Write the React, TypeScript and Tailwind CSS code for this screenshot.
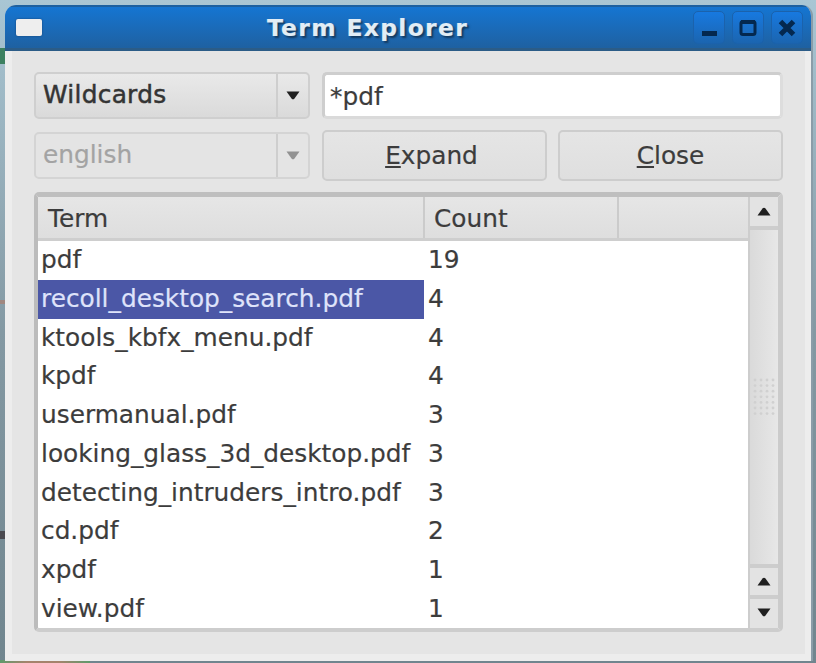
import type { ReactNode } from "react";

const rows: [string, number][] = [
  ["pdf", 19],
  ["recoll_desktop_search.pdf", 4],
  ["ktools_kbfx_menu.pdf", 4],
  ["kpdf", 4],
  ["usermanual.pdf", 3],
  ["looking_glass_3d_desktop.pdf", 3],
  ["detecting_intruders_intro.pdf", 3],
  ["cd.pdf", 2],
  ["xpdf", 1],
  ["view.pdf", 1],
];

function Arrow({ up = false, color = "#202020" }: { up?: boolean; color?: string }) {
  return (
    <svg width="14" height="9" viewBox="0 0 14 9" className={up ? "rotate-180" : ""}>
      <path d="M0.5 0.5H13.5L8.5 7.5Q7 9.2 5.5 7.5Z" fill={color} />
    </svg>
  );
}

function Combo({ label, disabled = false }: { label: string; disabled?: boolean }) {
  return (
    <div
      className={
        disabled
          ? "flex h-[47px] w-[276px] rounded-[5px] border-2 border-[#d4d4d4] bg-[#e4e4e4] text-[#a3a3a3]"
          : "flex h-[47px] w-[276px] rounded-[5px] border-2 border-[#cfcfcf] bg-linear-to-b from-[#e9e9e9] to-[#dadada] text-[#343434]"
      }
    >
      <span
        className={
          disabled
            ? "flex-1 pl-[7px] leading-[42px]"
            : "flex-1 pl-[7px] leading-[42px] tracking-[0.3px] [-webkit-text-stroke:0.5px_#343434]"
        }
      >
        {label}
      </span>
      <span className="flex w-[32px] items-center justify-center border-l-2 border-[#cecece]">
        <Arrow color={disabled ? "#929292" : "#202020"} />
      </span>
    </div>
  );
}

function PushButton({ children, className }: { children: ReactNode; className: string }) {
  return (
    <button
      className={`${className} h-[51px] rounded-[5px] border-2 border-[#cdcdcd] bg-linear-to-b from-[#e5e5e5] to-[#dfdfdf] text-center`}
    >
      {children}
    </button>
  );
}

function Mnemonic({ children }: { children: ReactNode }) {
  return <span className="underline decoration-[2px] underline-offset-[2px]">{children}</span>;
}

function TitleButton({ children }: { children: ReactNode }) {
  return (
    <div className="flex h-[33px] w-[32px] items-center justify-center rounded-[5px] border border-[#1b62ac] bg-linear-to-b from-[#1779e0] to-[#1b65b0]">
      <svg width="20" height="20" viewBox="0 0 20 20" fill="none" stroke="#04284f">
        {children}
      </svg>
    </div>
  );
}

export default function App() {
  return (
    <div className="h-[663px] w-[816px] overflow-hidden bg-linear-to-b from-[#a9c6d4] via-[#8499a3] to-[#70858e] font-['DejaVu_Sans',sans-serif] text-[24.8px] text-[#3c3c3c] [-webkit-text-stroke:0.2px]">
      <div className="h-[663px] bg-[linear-gradient(#3c8060,#3c8060),linear-gradient(#a08880,#a08880),linear-gradient(#4a4a50,#4a4a50),linear-gradient(90deg,#5f9a6c,#a5836c_30%,#a5836c_65%,#5f9a6c)] bg-[size:5px_16px,5px_4px,5px_8px,90px_3px] bg-[position:0_48px,0_300px,0_531px,0_660px] bg-no-repeat pt-[5px] pr-[3px] pl-[5px]">
        <div className="flex h-[656px] flex-col overflow-hidden rounded-t-[11px] border-r-2 border-[#8b9ca8] bg-[#e5e5e5]">
          <header className="flex h-[46px] shrink-0 items-center border-t-2 border-b-[3px] border-t-[#1c609f] border-b-[#2b5c87] bg-linear-to-b from-[#1475d2] to-[#1e61a1] pr-[8px] pl-[11px]">
            <div className="h-[17px] w-[26px] rounded-[2px] bg-[#eeeeee] shadow-[0_0_2px_#153f70]" />
            <h1 className="flex-1 pt-[1px] text-center text-[23.4px] leading-[40px] font-bold tracking-[1.35px] whitespace-nowrap text-[#e2edf5] [text-shadow:2px_2px_2px_#14395e]">
              Term Explorer
            </h1>
            <div className="flex gap-[7px]">
              <TitleButton>
                <path d="M3 15.5H18" strokeWidth="5" />
              </TitleButton>
              <TitleButton>
                <rect x="3" y="3.5" width="14" height="13" rx="2" strokeWidth="3" />
                <path d="M3 4H17" strokeWidth="4" />
              </TitleButton>
              <TitleButton>
                <path d="M3.5 3.5L16.5 16.5M16.5 3.5L3.5 16.5" strokeWidth="5" />
              </TitleButton>
            </div>
          </header>

          <main className="flex min-h-0 flex-1 flex-col border-r-[6px] border-b-[7px] border-l-[7px] border-[#ededed] pt-[21px] pr-[22px] pl-[22px]">
            <div className="flex justify-between">
              <Combo label="Wildcards" />
              <div className="h-[47px] w-[461px] rounded-[5px] border-[3px] border-[#cecece] border-r-[#dddddd] border-b-[#dadada] bg-white pl-[5px] leading-[43px]">
                *pdf
              </div>
            </div>
            <div className="mt-[11px] flex items-center justify-between">
              <Combo label="english" disabled />
              <div className="flex gap-[11px]">
                <PushButton className="w-[225px] pr-[6px]">
                  <Mnemonic>E</Mnemonic>xpand
                </PushButton>
                <PushButton className="w-[225px]">
                  <Mnemonic>C</Mnemonic>lose
                </PushButton>
              </div>
            </div>

            <section className="mt-[11px] flex h-[440px] rounded-[5px] border-t-[5px] border-r-[5px] border-b-[4px] border-l-4 border-t-[#bfbfbf] border-r-[#cbcbcb] border-b-[#cdcdcd] border-l-[#bcbcbc] bg-white">
              <div className="min-w-0 flex-1">
                <div className="flex h-[44px] border-b-[3px] border-[#cecece] bg-linear-to-b from-[#e6e6e6] to-[#dedede] leading-[44px]">
                  <div className="w-[387px] border-r-2 border-[#cbcbcb] pl-[10px]">Term</div>
                  <div className="w-[194px] border-r-2 border-[#cbcbcb] pl-[9px]">Count</div>
                </div>
                {rows.map(([term, count], i) => (
                  <div key={term} className="flex h-[38.75px] leading-[37px] whitespace-nowrap">
                    <div
                      className={
                        i === 1
                          ? "w-[386px] bg-[#4b57a6] pl-[3px] text-[#dfe3fa]"
                          : "w-[386px] pl-[3px]"
                      }
                    >
                      {term}
                    </div>
                    <div className="pl-[4px]">{count}</div>
                  </div>
                ))}
              </div>
              <div className="flex w-[30px] flex-col border-l-2 border-[#cdcdcd] bg-[#e3e3e3]">
                <div className="flex h-[29px] items-center justify-center">
                  <Arrow up />
                </div>
                <div className="flex flex-1 items-center justify-center border-y-[4px] border-[#cdcdcd] bg-linear-to-r from-[#dadada] to-[#e7e7e7]">
                  <svg width="24" height="38" viewBox="0 0 24 38" fill="#d0d0d0">
                    {Array.from({ length: 28 }, (_, i) => (
                      <circle key={i} cx={3 + (i % 4) * 6} cy={2 + Math.floor(i / 4) * 5.6} r="1.4" />
                    ))}
                  </svg>
                </div>
                <div className="flex h-[27px] items-center justify-center">
                  <Arrow up />
                </div>
                <div className="flex h-[33px] items-center justify-center border-t-[4px] border-[#cdcdcd] pb-[2px]">
                  <Arrow />
                </div>
              </div>
            </section>
          </main>
        </div>
      </div>
    </div>
  );
}
